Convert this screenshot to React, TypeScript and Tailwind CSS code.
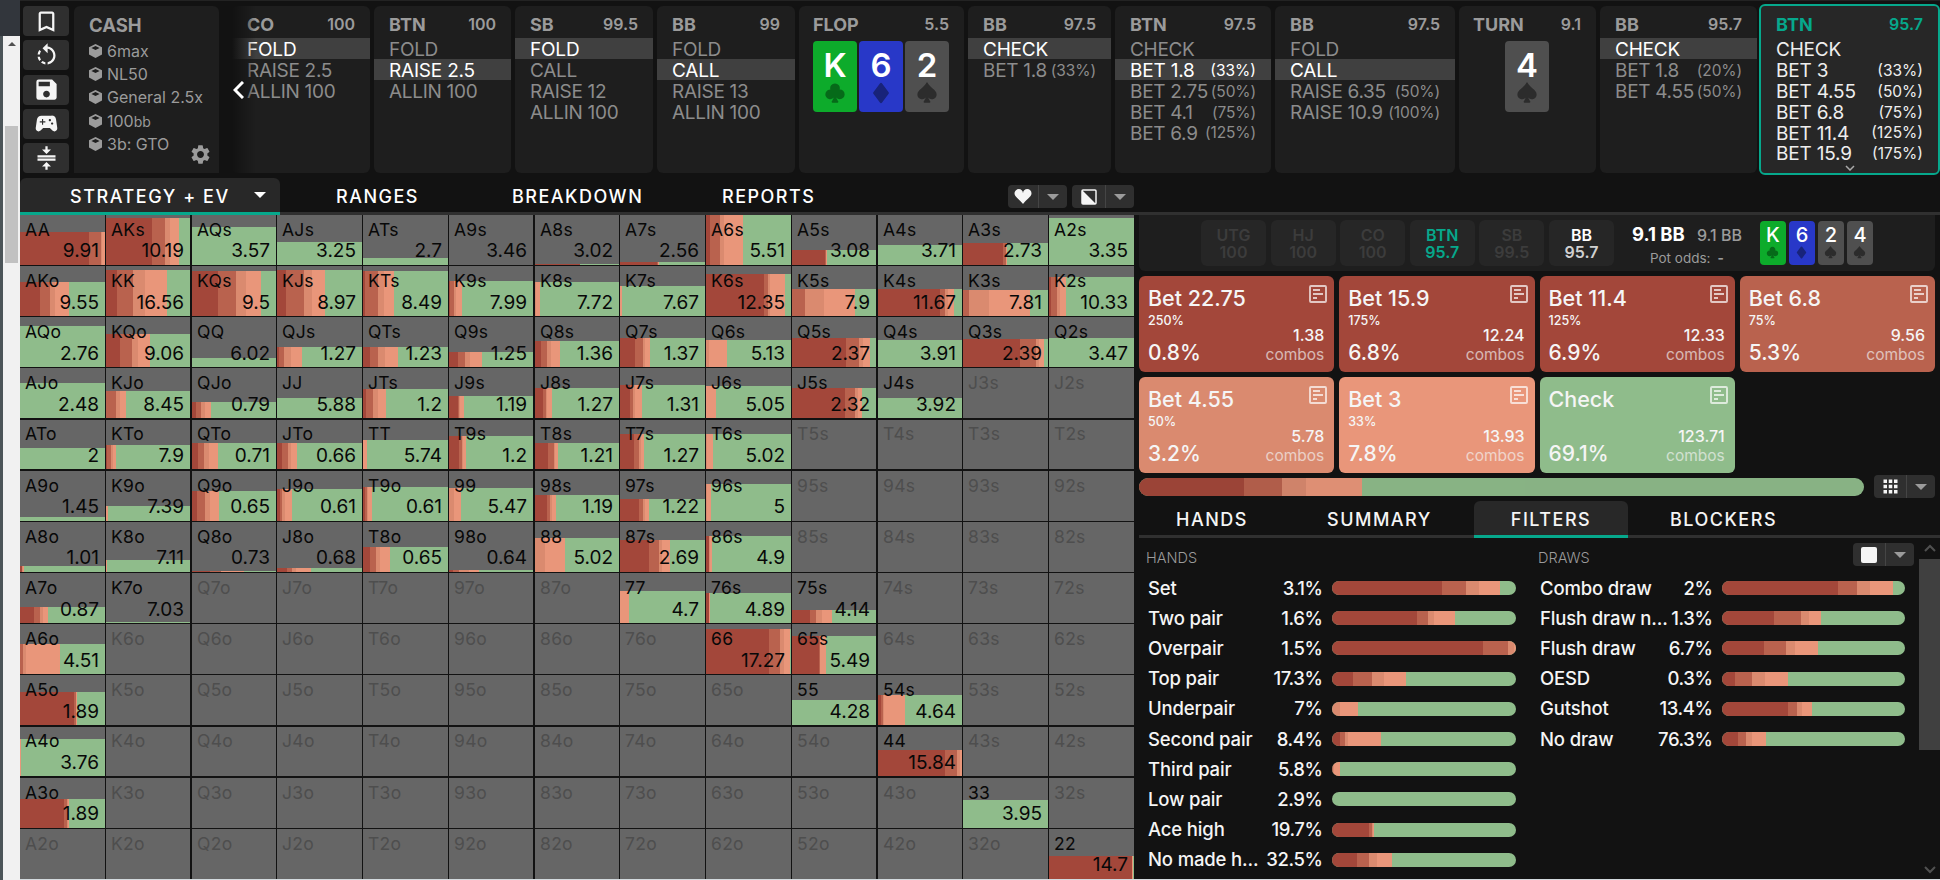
import { BsSuitClubFill, BsSuitDiamondFill, BsSuitHeartFill, BsSuitSpadeFill } from "react-icons/bs";
import { MdApps, MdBookmarkBorder, MdCompress, MdRotateLeft, MdSave, MdSettings, MdSportsEsports } from "react-icons/md";

const RANKS = ["A", "K", "Q", "J", "T", "9", "8", "7", "6", "5", "4", "3", "2"];

// hand: [ev, bar height, end of 100%+ bets, end of 75%, end of 50%, end of 33%], the rest is check
const HANDS: Record<string, [string, number, number, number, number, number]> = {
    AA: ["9.91", 33, 69, 81, 82, 85],
    AKs: ["10.19", 47, 46, 59, 64, 73],
    AQs: ["3.57", 38, 0, 0, 0, 0],
    AJs: ["3.25", 23, 0, 0, 0, 0],
    ATs: ["2.7", 7, 0, 0, 0, 0],
    A9s: ["3.46", 0, 0, 0, 0, 0],
    A8s: ["3.02", 1, 45, 45, 45, 45],
    A7s: ["2.56", 3, 37, 38, 38, 39],
    A6s: ["5.51", 50, 4, 14, 18, 37],
    A5s: ["3.08", 15, 33, 34, 34, 35],
    A4s: ["3.71", 20, 0, 0, 0, 0],
    A3s: ["2.73", 22, 40, 43, 43, 44],
    A2s: ["3.35", 47, 0, 0, 0, 0],
    AKo: ["9.55", 34, 20, 30, 35, 49],
    KK: ["16.56", 46, 11, 27, 39, 61],
    KQs: ["9.5", 45, 26, 44, 54, 69],
    KJs: ["8.97", 46, 9, 27, 35, 48],
    KTs: ["8.49", 45, 2, 15, 21, 31],
    K9s: ["7.99", 35, 1, 5, 7, 13],
    K8s: ["7.72", 34, 0, 0, 1, 5],
    K7s: ["7.67", 30, 0, 0, 0, 2],
    K6s: ["12.35", 42, 58, 62, 64, 79],
    K5s: ["7.9", 27, 0, 13, 32, 63],
    K4s: ["11.67", 27, 62, 67, 70, 76],
    K3s: ["7.81", 26, 0, 6, 26, 67],
    K2s: ["10.33", 39, 2, 8, 11, 17],
    AQo: ["2.76", 41, 0, 0, 0, 0],
    KQo: ["9.06", 33, 14, 26, 32, 44],
    QQ: ["6.02", 9, 0, 0, 0, 0],
    QJs: ["1.27", 20, 2, 7, 14, 25],
    QTs: ["1.23", 20, 7, 15, 22, 35],
    Q9s: ["1.25", 15, 9, 16, 21, 33],
    Q8s: ["1.36", 26, 6, 12, 16, 25],
    Q7s: ["1.37", 29, 15, 23, 25, 30],
    Q6s: ["5.13", 27, 0, 0, 3, 21],
    Q5s: ["2.37", 29, 54, 67, 71, 78],
    Q4s: ["3.91", 27, 0, 0, 0, 0],
    Q3s: ["2.39", 28, 57, 73, 76, 81],
    Q2s: ["3.47", 29, 0, 0, 0, 0],
    AJo: ["2.48", 35, 0, 0, 0, 0],
    KJo: ["8.45", 27, 0, 10, 14, 20],
    QJo: ["0.79", 16, 4, 9, 13, 19],
    JJ: ["5.88", 20, 0, 0, 0, 0],
    JTs: ["1.2", 29, 3, 10, 15, 23],
    J9s: ["1.19", 22, 9, 10, 11, 15],
    J8s: ["1.27", 30, 8, 11, 12, 17],
    J7s: ["1.31", 33, 10, 13, 15, 22],
    J6s: ["5.05", 32, 0, 0, 0, 10],
    J5s: ["2.32", 30, 53, 63, 66, 70],
    J4s: ["3.92", 20, 0, 0, 0, 0],
    ATo: ["2", 21, 0, 0, 0, 0],
    KTo: ["7.9", 24, 1, 5, 7, 10],
    QTo: ["0.71", 26, 6, 12, 17, 26],
    JTo: ["0.66", 26, 5, 11, 14, 20],
    TT: ["5.74", 29, 0, 0, 0, 4],
    T9s: ["1.2", 33, 10, 13, 14, 17],
    T8s: ["1.21", 26, 13, 19, 20, 23],
    T7s: ["1.27", 35, 14, 19, 21, 24],
    T6s: ["5.02", 35, 0, 0, 1, 7],
    A9o: ["1.45", 4, 0, 0, 0, 0],
    K9o: ["7.39", 15, 0, 0, 0, 2],
    Q9o: ["0.65", 30, 5, 13, 18, 27],
    J9o: ["0.61", 32, 3, 5, 8, 15],
    T9o: ["0.61", 34, 2, 4, 5, 9],
    "99": ["5.47", 33, 0, 0, 5, 12],
    "98s": ["1.19", 26, 12, 15, 17, 21],
    "97s": ["1.22", 22, 19, 23, 25, 29],
    "96s": ["5", 37, 0, 0, 1, 5],
    A8o: ["1.01", 6, 2, 2, 3, 4],
    K8o: ["7.11", 12, 0, 0, 0, 1],
    Q8o: ["0.73", 1, 18, 29, 29, 52],
    J8o: ["0.68", 4, 10, 15, 19, 34],
    T8o: ["0.65", 25, 7, 13, 17, 27],
    "98o": ["0.64", 2, 4, 10, 20, 30],
    "88": ["5.02", 34, 0, 0, 10, 30],
    "87s": ["2.69", 32, 29, 39, 42, 50],
    "86s": ["4.9", 36, 3, 3, 4, 6],
    A7o: ["0.87", 16, 14, 20, 23, 28],
    K7o: ["7.03", 1, 0, 0, 0, 0],
    "77": ["4.7", 32, 0, 0, 0, 9],
    "76s": ["4.89", 30, 3, 3, 3, 4],
    "75s": ["4.14", 13, 18, 24, 30, 40],
    A6o: ["4.51", 30, 0, 3, 6, 40],
    "66": ["17.27", 45, 63, 74, 78, 84],
    "65s": ["5.49", 38, 27, 28, 28, 34],
    A5o: ["1.89", 33, 54, 56, 56, 57],
    "55": ["4.28", 25, 0, 0, 0, 0],
    "54s": ["4.64", 30, 3, 5, 6, 27],
    A4o: ["3.76", 37, 0, 0, 0, 1],
    "44": ["15.84", 26, 67, 79, 82, 84],
    A3o: ["1.89", 29, 44, 47, 48, 49],
    "33": ["3.95", 28, 0, 0, 0, 0],
    "22": ["14.7", 23, 83, 83, 83, 84],
};

const ACTIONS = [
    { title: "Bet 22.75", size: "250%", combos: "1.38", freq: "0.8%", color: "bg-[#a3473a]" },
    { title: "Bet 15.9", size: "175%", combos: "12.24", freq: "6.8%", color: "bg-[#a3473a]" },
    { title: "Bet 11.4", size: "125%", combos: "12.33", freq: "6.9%", color: "bg-[#a3473a]" },
    { title: "Bet 6.8", size: "75%", combos: "9.56", freq: "5.3%", color: "bg-[#b9624e]" },
    { title: "Bet 4.55", size: "50%", combos: "5.78", freq: "3.2%", color: "bg-[#da8a6f]" },
    { title: "Bet 3", size: "33%", combos: "13.93", freq: "7.8%", color: "bg-[#e9967a]" },
    { title: "Check", size: "", combos: "123.71", freq: "69.1%", color: "bg-[#8fbc8b]" },
];

type FilterRow = [string, string, number[]];

const MADE_HANDS: FilterRow[] = [
    ["Set", "3.1%", [110, 134, 147, 168]],
    ["Two pair", "1.6%", [85, 96, 102, 123]],
    ["Overpair", "1.5%", [151, 176, 182, 184]],
    ["Top pair", "17.3%", [21, 40, 52, 74]],
    ["Underpair", "7%", [0, 0, 8, 26]],
    ["Second pair", "8.4%", [8, 13, 16, 49]],
    ["Third pair", "5.8%", [0, 1, 2, 8]],
    ["Low pair", "2.9%", [0, 0, 0, 0]],
    ["Ace high", "19.7%", [37, 40, 41, 42]],
    ["No made h...", "32.5%", [25, 37, 45, 60]],
];

const DRAWS: FilterRow[] = [
    ["Combo draw", "2%", [116, 135, 148, 171]],
    ["Flush draw n...", "1.3%", [52, 79, 87, 99]],
    ["Flush draw", "6.7%", [42, 64, 73, 96]],
    ["OESD", "0.3%", [13, 30, 43, 66]],
    ["Gutshot", "13.4%", [66, 75, 80, 90]],
    ["No draw", "76.3%", [16, 24, 30, 44]],
];

const SEATS = [
    ["UTG", "100", "text-[#3c3c3c]", "text-[#3c3c3c]"],
    ["HJ", "100", "text-[#3c3c3c]", "text-[#3c3c3c]"],
    ["CO", "100", "text-[#3c3c3c]", "text-[#3c3c3c]"],
    ["BTN", "95.7", "text-[#06a88c]", "text-[#06a88c]"],
    ["SB", "99.5", "text-[#3c3c3c]", "text-[#3c3c3c]"],
    ["BB", "95.7", "text-white", "text-[#d0d0d0]"],
];

const SEGMENTS = ["bg-[#a3473a]", "bg-[#b9624e]", "bg-[#da8a6f]", "bg-[#e9967a]"];

function StackedBar({ ends }: { ends: number[] }) {
    return (
        <>
            {ends.map((end, i) => (
                <div key={i} className={`h-full shrink-0 ${SEGMENTS[i]}`} style={{ width: end - (i ? ends[i - 1] : 0) }} />
            ))}
        </>
    );
}

function Caret({ className = "" }: { className?: string }) {
    return (
        <svg viewBox="0 0 12 6" className={className}>
            <path d="M0 0h12L6 6z" fill="currentColor" />
        </svg>
    );
}

function CubeIcon() {
    return (
        <svg viewBox="0 0 13 14" className="h-[14px] w-[13px]">
            <path d="M6.5 0 13 3.2v7.4L6.5 14 0 10.6V3.2z" fill="#9b9b9b" />
            <path d="M6.5 2 10.6 4 6.5 6.100 2.400 4z" fill="#1e1e1e" />
        </svg>
    );
}

function NoteIcon() {
    return (
        <svg viewBox="0 0 18 18" className="h-[18px] w-[18px] opacity-70" fill="none" stroke="#fff">
            <rect x="1" y="1" width="16" height="16" rx="1" strokeWidth="1.900" />
            <path d="M4 5h7M4 9h10M4 13h4" strokeWidth="1.900" />
        </svg>
    );
}

function Suit({ suit, className }: { suit: string; className: string }) {
    if (suit === "c") return <BsSuitClubFill className={`text-[#066a19] ${className}`} />;
    if (suit === "d") return <BsSuitDiamondFill className={`text-[#18237a] ${className}`} />;
    return <BsSuitSpadeFill className={`text-[#2c2c2c] ${className}`} />;
}

const SUIT_BG: Record<string, string> = { c: "bg-[#0dab2b]", d: "bg-[#2838c8]", s: "bg-[#4f4f4f]" };

function PlayingCard({ rank, suit }: { rank: string; suit: string }) {
    return (
        <div className={`flex h-[71px] w-11 flex-col items-center rounded ${SUIT_BG[suit]}`}>
            <span className="mt-[8px] text-[33px] leading-[33px] font-semibold text-white">{rank}</span>
            <Suit suit={suit} className="h-[22px] w-[22px]" />
        </div>
    );
}

function SmallCard({ rank, suit }: { rank: string; suit: string }) {
    return (
        <div className={`flex h-11 w-[26px] flex-col items-center rounded ${SUIT_BG[suit]}`}>
            <span className="mt-[4px] text-[20px] leading-[21px] font-medium text-white">{rank}</span>
            <Suit suit={suit} className="h-[13px] w-[13px]" />
        </div>
    );
}

function HistoryCard({ pos, stack, width, rows = [], picked = -1, active = false, cards = [] }: { pos: string; stack: string; width: string; rows?: string[][]; picked?: number; active?: boolean; cards?: string[] }) {
    return (
        <div className={`relative flex shrink-0 flex-col overflow-hidden ${width} ${active ? "-my-0.5 h-[171px] rounded-md border-2 border-[#06a88c] bg-[#272727]" : "h-[167px] rounded-md bg-[#1e1e1e]"}`}>
            <div className={`flex h-8 items-center justify-between pt-1 pr-[15px] ${cards.length ? "pl-[14px]" : "pl-[15px]"} ${active ? "text-[#06a88c]" : "text-[#9b9b9b]"}`}>
                <span className="text-[18px] font-bold">{pos}</span>
                <span className="text-[16px] font-semibold">{stack}</span>
            </div>
            {rows.map(([name, pct], i) => (
                <div key={name} className={`flex h-[20.800px] shrink-0 items-center justify-between px-[15px] pt-[3px] leading-none ${i === picked ? "bg-[#404040] text-white" : active ? "text-[#eeeeee]" : "text-[#8c8c8c]"}`}>
                    <span className={`text-[19px] ${i === picked || active ? "tracking-[-0.200px]" : "tracking-[-0.300px]"}`}>{name}</span>
                    {pct && <span className={`text-[15.500px] ${i === picked || active ? "" : "tracking-[-0.100px]"}`}>({pct})</span>}
                </div>
            ))}
            {cards.length > 0 && (
                <div className="mt-[3px] flex justify-center gap-0.5 pr-px">
                    {cards.map((c) => (
                        <PlayingCard key={c} rank={c[0]} suit={c[1]} />
                    ))}
                </div>
            )}
            {active && (
                <svg viewBox="0 0 10 6" className="absolute bottom-[2px] left-[84px] h-[6px] w-[10px]" fill="none" stroke="#aaa" strokeWidth="1.500">
                    <path d="M1 1l4 4 4-4" />
                </svg>
            )}
        </div>
    );
}

function SplitButton({ left, width, children }: { left: string; width: string; children: React.ReactNode }) {
    return (
        <div className={`flex h-[23px] overflow-hidden rounded bg-[#2f2f2f] ${width}`}>
            <div className={`flex items-center justify-center border-r border-[#454545] text-[#f5f5f5] ${left}`}>{children}</div>
            <div className="flex flex-1 items-center justify-center text-[#9b9b9b]">
                <Caret className="h-[6px] w-[12px]" />
            </div>
        </div>
    );
}

function HandMatrix() {
    return (
        <div className="grid h-[664px] w-[1114px] shrink-0 grid-cols-[86px_86px_85px_86px_86px_86px_85px_86px_86px_86px_85px_86px_85px] grid-rows-[51px_51px_51px_52px_51px_51px_51px_51px_51px_52px_51px_51px_50px] bg-[#121212]">
            {RANKS.map((r, y) =>
                RANKS.map((c, x) => {
                    const name = x === y ? r + c : x > y ? r + c + "s" : c + r + "o";
                    const hand = HANDS[name];
                    const right = x === 1 || x === 5 || x === 9 ? "mr-0.5" : x === 12 ? "" : "mr-px";
                    const bottom = y === 3 || y === 4 || y === 9 || y === 10 ? "mb-0.5" : y === 12 ? "" : "mb-px";
                    const labelTop = y === 4 || y === 10 ? "mt-[3px]" : "mt-1";
                    const evTop = [1, 2, 3, 4, 7, 8, 9, 10].includes(y) ? "-mt-px" : "-mt-[2px]";
                    return (
                        <div key={name} className={`relative overflow-hidden bg-[#666666] ${right} ${bottom}`}>
                            {hand && (
                                <div className="absolute inset-x-0 bottom-0 flex bg-[#8fbc8b]" style={{ height: hand[1] }}>
                                    <StackedBar ends={hand.slice(2) as number[]} />
                                </div>
                            )}
                            <div className={`relative flex h-full flex-col pr-[6px] pl-[5px] ${hand ? "text-[#080808]" : "text-[#4e4e4e]"}`}>
                                <span className={`text-[17.500px] leading-[22px] tracking-[0.300px] ${labelTop}`}>{name}</span>
                                {hand && <span className={`text-right text-[19px] leading-[24px] ${evTop}`}>{hand[0]}</span>}
                            </div>
                        </div>
                    );
                })
            )}
        </div>
    );
}

function FilterColumn({ title, rows, width, bar }: { title: string; rows: FilterRow[]; width: string; bar: string }) {
    return (
        <div className={`shrink-0 ${width}`}>
            <h3 className="-ml-0.5 h-[35px] pt-[9px] text-[14.500px] leading-[22px] font-light text-[#9b9b9b]">{title}</h3>
            {rows.map(([label, pct, ends]) => (
                <div key={label} className="flex h-[30.200px] items-center text-[18.500px] font-medium tracking-[-0.150px] text-[#f5f5f5]">
                    <span className="flex-1 pt-px whitespace-nowrap">{label}</span>
                    <span className="pt-px tracking-[-0.400px]">{pct}</span>
                    <div className={`ml-[9.500px] flex h-[14px] shrink-0 overflow-hidden rounded-full bg-[#8fbc8b] ${bar}`}>
                        <StackedBar ends={ends} />
                    </div>
                </div>
            ))}
        </div>
    );
}

export default function App() {
    return (
        <div className="flex h-[880px] w-[1940px] overflow-hidden bg-[#121212] font-['Inter',sans-serif]">
            {/* browser edge + scrollbar */}
            <div className="flex w-5 shrink-0 flex-col">
                <div className="h-9 bg-[#32363c]" />
                <div className="flex flex-1">
                    <div className="w-[3px] bg-[#4b5458]" />
                    <div className="flex flex-1 flex-col items-center bg-[#f1f1f1]">
                        <Caret className="mt-[6px] h-[4px] w-[8px] rotate-180 text-[#505050]" />
                        <div className="mt-20 h-[137px] w-[13px] bg-[#c1c1c1]" />
                    </div>
                </div>
            </div>

            <div className="flex w-[1920px] flex-col border-t border-[#232323]">
                {/* top bar */}
                <div className="flex h-[172px] pt-[5px] pl-[3px]">
                    <div className="flex h-[167px] w-[46px] shrink-0 flex-col justify-between text-[#f5f5f5]">
                        {[MdBookmarkBorder, MdRotateLeft, MdSave, MdSportsEsports, MdCompress].map((Icon, i) => (
                            <button key={i} className="flex h-[30px] items-center justify-center rounded bg-[#2f2f2f]">
                                <Icon className="h-[27px] w-[27px]" />
                            </button>
                        ))}
                    </div>
                    <div className="relative ml-[5px] h-[167px] w-[145px] shrink-0 rounded-tl-md rounded-tr-md bg-[#1e1e1e] pt-1.5 pl-[15px] text-[#9b9b9b]">
                        <div className="text-[18.500px] leading-[27px] font-bold">CASH</div>
                        {["6max", "NL50", "General 2.5x", "100bb", "3b: GTO"].map((t) => (
                            <div key={t} className="flex h-[23.300px] items-center gap-[5px] text-[16px]">
                                <CubeIcon />
                                {t === "100bb" ? (
                                    <span>
                                        100<span className="text-[14px]">bb</span>
                                    </span>
                                ) : (
                                    <span>{t}</span>
                                )}
                            </div>
                        ))}
                        <MdSettings className="absolute right-[7px] bottom-[7px] h-[23px] w-[23px]" />
                    </div>
                    <div className="relative ml-[13px] flex gap-1">
                        <HistoryCard pos="CO" stack="100" width="w-[138px]" rows={[["FOLD"], ["RAISE 2.5"], ["ALLIN 100"]]} picked={0} />
                        <HistoryCard pos="BTN" stack="100" width="w-[137px]" rows={[["FOLD"], ["RAISE 2.5"], ["ALLIN 100"]]} picked={1} />
                        <HistoryCard pos="SB" stack="99.5" width="w-[138px]" rows={[["FOLD"], ["CALL"], ["RAISE 12"], ["ALLIN 100"]]} picked={0} />
                        <HistoryCard pos="BB" stack="99" width="w-[138px]" rows={[["FOLD"], ["CALL"], ["RAISE 13"], ["ALLIN 100"]]} picked={1} />
                        <HistoryCard pos="FLOP" stack="5.5" width="w-[165px]" cards={["Kc", "6d", "2s"]} />
                        <HistoryCard pos="BB" stack="97.5" width="w-[143px]" rows={[["CHECK"], ["BET 1.8", "33%"]]} picked={0} />
                        <HistoryCard pos="BTN" stack="97.5" width="w-[156px]" rows={[["CHECK"], ["BET 1.8", "33%"], ["BET 2.75", "50%"], ["BET 4.1", "75%"], ["BET 6.9", "125%"]]} picked={1} />
                        <HistoryCard pos="BB" stack="97.5" width="w-[180px]" rows={[["FOLD"], ["CALL"], ["RAISE 6.35", "50%"], ["RAISE 10.9", "100%"]]} picked={1} />
                        <HistoryCard pos="TURN" stack="9.1" width="w-[137px]" cards={["4s"]} />
                        <HistoryCard pos="BB" stack="95.7" width="w-[157px]" rows={[["CHECK"], ["BET 1.8", "20%"], ["BET 4.55", "50%"]]} picked={0} />
                        <div className="-ml-0.5">
                            <HistoryCard active pos="BTN" stack="95.7" width="w-[181px]" rows={[["CHECK"], ["BET 3", "33%"], ["BET 4.55", "50%"], ["BET 6.8", "75%"], ["BET 11.4", "125%"], ["BET 15.9", "175%"]]} />
                        </div>
                        {/* scroll fade */}
                        <div className="pointer-events-none absolute top-0 left-0 h-[167px] w-6 bg-linear-to-r from-[#121212] to-transparent" />
                        <svg viewBox="0 0 11 18" className="absolute top-[75px] left-[1px] h-[18px] w-[11px]" fill="none" stroke="#fff" strokeWidth="3">
                            <path d="M10 1 2 9l8 8" />
                        </svg>
                    </div>
                </div>

                {/* main tabs */}
                <div className="flex h-[42px] items-end border-b-[3px] border-[#303030] text-[18px] font-medium text-white">
                    <div className="-mb-[3px] flex h-[37px] w-[260px] items-center rounded-t-md border-b-[3px] border-[#06a88c] bg-[#282828] pl-[50px]">
                        <span className="w-[184px] pt-[3px] tracking-[1.550px] whitespace-nowrap">STRATEGY + EV</span>
                        <Caret className="h-[6px] w-[12px]" />
                    </div>
                    <div className="flex h-[34px] items-center pt-[3px] pl-[56px] tracking-[1.500px]">
                        <span className="w-[176px]">RANGES</span>
                        <span className="w-[210px]">BREAKDOWN</span>
                        <span className="w-[286px]">REPORTS</span>
                    </div>
                    <div className="flex gap-[5px] pb-[4px]">
                        <SplitButton left="w-[31px]" width="w-[59px]">
                            <BsSuitHeartFill className="h-[17px] w-[18px]" />
                        </SplitButton>
                        <SplitButton left="w-[34px]" width="w-[62px]">
                            <svg viewBox="0 0 16 16" className="h-[16px] w-[16px]">
                                <rect x="1" y="1" width="14" height="14" rx="1" fill="none" stroke="currentColor" strokeWidth="1.500" />
                                <path d="M1 1v14h14z" fill="currentColor" />
                            </svg>
                        </SplitButton>
                    </div>
                </div>

                <div className="flex h-[664px]">
                    <HandMatrix />

                    <div className="ml-[5px] flex w-[801px] flex-col">
                        {/* table state */}
                        <div className="flex h-14 w-[796px] rounded-b-md bg-[#1e1e1e] pt-[5px] pl-[62px]">
                            <div className="flex gap-[4.600px]">
                                {SEATS.map(([pos, stack, c1, c2]) => (
                                    <div key={pos} className="flex h-[46px] w-[65px] flex-col items-center justify-center rounded-md bg-[#262626] pt-px text-[16px] leading-[17px] font-semibold">
                                        <span className={c1}>{pos}</span>
                                        <span className={c2}>{stack}</span>
                                    </div>
                                ))}
                            </div>
                            <div className="ml-[18px] w-[110px]">
                                <div className="flex items-baseline justify-between leading-[28px] whitespace-nowrap">
                                    <span className="text-[18.500px] font-bold text-white">9.1 BB</span>
                                    <span className="text-[16px] font-medium text-[#9b9b9b]">9.1 BB</span>
                                </div>
                                <div className="pl-[18px] text-[13.500px] leading-[18px] whitespace-pre text-[#9b9b9b]">
                                    Pot odds: <span className="font-bold"> -</span>
                                </div>
                            </div>
                            <div className="mt-px ml-[18px] flex gap-[3px]">
                                <SmallCard rank="K" suit="c" />
                                <SmallCard rank="6" suit="d" />
                                <SmallCard rank="2" suit="s" />
                                <SmallCard rank="4" suit="s" />
                            </div>
                        </div>

                        {/* actions */}
                        <div className="mt-[5px] grid w-[796px] grid-cols-4 gap-[5px]">
                            {ACTIONS.map((a) => (
                                <div key={a.title} className={`relative flex h-24 flex-col justify-between rounded-md pr-[10px] pl-[9px] text-[#f5f5f5] ${a.color}`}>
                                    <div className="pt-[9px]">
                                        <div className="text-[21.500px] leading-[26px] font-medium">{a.title}</div>
                                        <div className="pt-0.5 text-[12.500px] leading-[16px] font-medium">{a.size}</div>
                                    </div>
                                    <div className="flex h-[43px] items-end justify-between pb-[6px]">
                                        <span className="text-[21px] leading-[26px] font-medium">{a.freq}</span>
                                        <div className="pb-px text-right text-[16px] leading-5">
                                            <div className="font-medium">{a.combos}</div>
                                            <div className="text-[15.500px] opacity-65">combos</div>
                                        </div>
                                    </div>
                                    <div className="absolute top-[9px] right-[7px]">
                                        <NoteIcon />
                                    </div>
                                </div>
                            ))}
                        </div>

                        <div className="mt-0.5 flex h-[23px] w-[796px] items-center justify-between">
                            <div className="flex h-[18px] w-[725px] overflow-hidden rounded-full bg-[#8fbc8b] opacity-95">
                                <StackedBar ends={[105, 143, 167, 223]} />
                            </div>
                            <SplitButton left="w-[33px]" width="w-[61px]">
                                <MdApps className="h-[21px] w-[21px]" />
                            </SplitButton>
                        </div>

                        {/* sub tabs */}
                        <div className="mt-[3px] flex h-[37px] shrink-0 border-b-[3px] border-[#303030] text-[18px] leading-[37px] font-medium tracking-[1.500px] text-[#f5f5f5]">
                            <span className="w-[188px] pl-[37px]">HANDS</span>
                            <span className="w-[147px]">SUMMARY</span>
                            <span className="h-[37px] w-[154px] rounded-t-md border-b-[3px] border-[#06a88c] bg-[#282828] text-center">FILTERS</span>
                            <span className="pl-[42px]">BLOCKERS</span>
                        </div>

                        <div className="relative flex h-[341px] pl-[9px]">
                            <FilterColumn title="HANDS" rows={MADE_HANDS} width="w-[368px]" bar="w-[184px]" />
                            <div className="w-6" />
                            <FilterColumn title="DRAWS" rows={DRAWS} width="w-[365px]" bar="w-[183px]" />
                            <div className="absolute top-[5px] right-[26px]">
                                <SplitButton left="w-[33px]" width="w-[61px]">
                                    <div className="h-4 w-4 rounded-xs bg-[#f5f5f5]" />
                                </SplitButton>
                            </div>
                            <div className="ml-auto flex w-[21px] flex-col items-center text-[#505050]">
                                <svg viewBox="0 0 12 8" className="mt-[6px] h-2 w-3" fill="none" stroke="currentColor" strokeWidth="2">
                                    <path d="M1 7l5-5 5 5" />
                                </svg>
                                <div className="mt-[7px] h-[191px] w-full bg-[#404040]" />
                                <svg viewBox="0 0 12 8" className="mt-auto mb-[5px] h-2 w-3" fill="none" stroke="currentColor" strokeWidth="2">
                                    <path d="M1 1l5 5 5-5" />
                                </svg>
                            </div>
                        </div>
                    </div>
                </div>
                <div className="h-px bg-[#d3dade]" />
            </div>
        </div>
    );
}
